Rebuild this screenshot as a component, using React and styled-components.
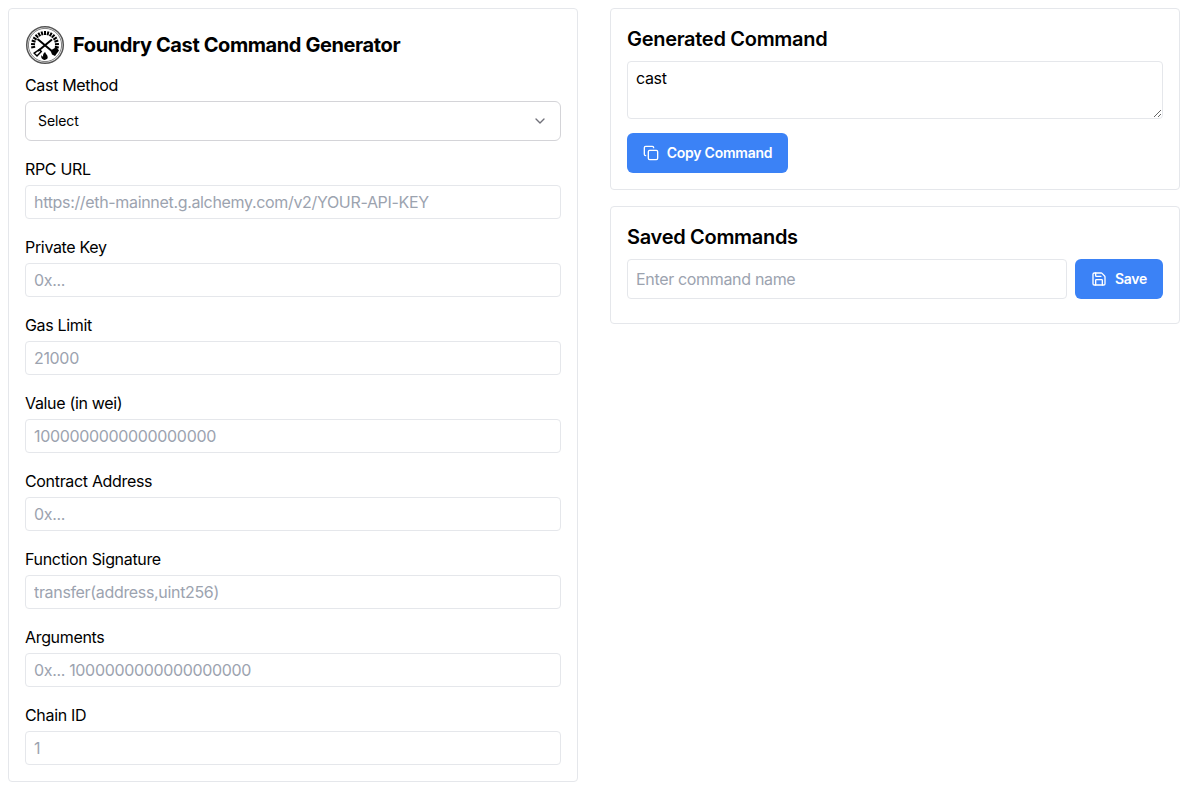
import React from "react";
import styled, { createGlobalStyle } from "styled-components";
import { ChevronDown, Copy, Save } from "lucide-react";

const GlobalStyle = createGlobalStyle`
  * { box-sizing: border-box; }
  body {
    margin: 0;
    background: #fff;
    color: #000;
    font-family: Inter, "Liberation Sans", sans-serif;
  }
`;

const Page = styled.div`
  display: grid;
  grid-template-columns: 570px 570px;
  column-gap: 32px;
  align-items: start;
  padding: 8px 9px 8px 8px;
`;

const Column = styled.div`
  display: flex;
  flex-direction: column;
  gap: 16px;
`;

const Card = styled.section`
  border: 1px solid #e5e7eb;
  border-radius: 4px;
  background: #fff;
  padding: 16px;
`;

const Header = styled.div`
  display: flex;
  align-items: center;
  gap: 8px;
  height: 40px;
  margin-bottom: 8px;
`;

const Title = styled.h1`
  margin: 0;
  font-size: 20px;
  line-height: 28px;
  font-weight: 700;
  letter-spacing: -0.4px;
`;

const SectionTitle = styled.h2`
  margin: 0 0 8px;
  font-size: 20px;
  line-height: 28px;
  font-weight: 600;
  letter-spacing: -0.3px;
`;

const Field = styled.div`
  margin-bottom: 16px;
  &:last-child { margin-bottom: 0; }
`;

const Label = styled.label`
  display: block;
  font-size: 16px;
  line-height: 24px;
  letter-spacing: -0.33px;
  margin-bottom: 4px;
`;

const Input = styled.input`
  display: block;
  width: 100%;
  height: ${(p) => p.$height || 34}px;
  padding: 0 8px;
  border: 1px solid #e5e7eb;
  border-radius: 4px;
  font: 400 16px/24px Inter, "Liberation Sans", sans-serif;
  letter-spacing: -0.33px;
  color: #000;
  background: #fff;
  outline: none;
  &::placeholder { color: #9ca3af; opacity: 1; }
`;

const SelectBox = styled.button`
  display: flex;
  align-items: center;
  justify-content: space-between;
  width: 100%;
  height: 40px;
  padding: 0 12px;
  border: 1px solid #d4d4d8;
  border-radius: 6px;
  background: #fff;
  color: #000;
  font: 400 14px/20px Inter, "Liberation Sans", sans-serif;
  letter-spacing: -0.1px;
  svg { color: #71717a; }
`;

const TextArea = styled.textarea`
  display: block;
  width: 100%;
  height: 58px;
  padding: 4px 8px;
  border: 1px solid #e5e7eb;
  border-radius: 4px;
  font: 400 16px/24px Inter, "Liberation Sans", sans-serif;
  letter-spacing: -0.33px;
  color: #000;
  background: #fff;
  outline: none;
  margin-bottom: 14px;
`;

const Button = styled.button`
  display: inline-flex;
  align-items: center;
  justify-content: center;
  gap: 8px;
  height: 40px;
  width: ${(p) => p.$width}px;
  flex: none;
  border: 0;
  border-radius: 6px;
  background: #3b82f6;
  color: #fff;
  font: 600 14px/20px Inter, "Liberation Sans", sans-serif;
  letter-spacing: -0.25px;
`;

const SaveRow = styled.div`
  display: flex;
  gap: 8px;
  margin-bottom: 8px;
`;

const rays = Array.from({ length: 15 }, (_, i) => -100 + (i * 200) / 14);

const FoundryLogo = () => (
  <svg width="40" height="40" viewBox="0 0 40 40" aria-hidden="true">
    <circle cx="20" cy="20" r="18.3" fill="#fff" stroke="#555" strokeWidth="1.5" />
    <circle cx="20" cy="20" r="16.6" fill="none" stroke="#000" strokeWidth="0.5" />
    {rays.map((a) => (
      <line
        key={a}
        x1="20"
        y1="6"
        x2="20"
        y2="10"
        stroke="#000"
        strokeWidth="2"
        transform={`rotate(${a} 20 20)`}
      />
    ))}
    <line x1="12.5" y1="14" x2="28" y2="27" stroke="#000" strokeWidth="2" />
    <path d="M25.5 25.5l6-3.5 2.5 3.5-4 5.5-3-1.5z" fill="#000" />
    <line x1="27" y1="14.5" x2="13" y2="26" stroke="#000" strokeWidth="2" />
    <path d="M14.5 24.5l1.8 2-4.3 4.5-2.8-2.8z" fill="none" stroke="#000" strokeWidth="1.5" />
    <path d="M19.6 35c-2.8-.5-4-2.6-3-4.9.3 1.1 1 1.5 1.5 1.5-.4-1.9.4-3.7 2.2-4.6-.2 1.8 2.7 2.9 2.4 5.6-.1 1.3-1.1 2.1-3.1 2.4z" fill="#000" />
  </svg>
);

const fields = [
  ["RPC URL", "https://eth-mainnet.g.alchemy.com/v2/YOUR-API-KEY"],
  ["Private Key", "0x..."],
  ["Gas Limit", "21000"],
  ["Value (in wei)", "1000000000000000000"],
  ["Contract Address", "0x..."],
  ["Function Signature", "transfer(address,uint256)"],
  ["Arguments", "0x... 1000000000000000000"],
  ["Chain ID", "1"],
];

export default function App() {
  return (
    <>
      <GlobalStyle />
      <Page>
        <Card>
          <Header>
            <FoundryLogo />
            <Title>Foundry Cast Command Generator</Title>
          </Header>
          <Field>
            <Label>Cast Method</Label>
            <SelectBox type="button">
              <span>Select</span>
              <ChevronDown size={16} />
            </SelectBox>
          </Field>
          {fields.map(([label, placeholder]) => (
            <Field key={label}>
              <Label>{label}</Label>
              <Input placeholder={placeholder} />
            </Field>
          ))}
        </Card>
        <Column>
          <Card>
            <SectionTitle>Generated Command</SectionTitle>
            <TextArea readOnly value="cast" />
            <Button type="button" $width={161}>
              <Copy size={16} />
              Copy Command
            </Button>
          </Card>
          <Card>
            <SectionTitle>Saved Commands</SectionTitle>
            <SaveRow>
              <Input $height={40} placeholder="Enter command name" />
              <Button type="button" $width={88}>
                <Save size={16} />
                Save
              </Button>
            </SaveRow>
          </Card>
        </Column>
      </Page>
    </>
  );
}
